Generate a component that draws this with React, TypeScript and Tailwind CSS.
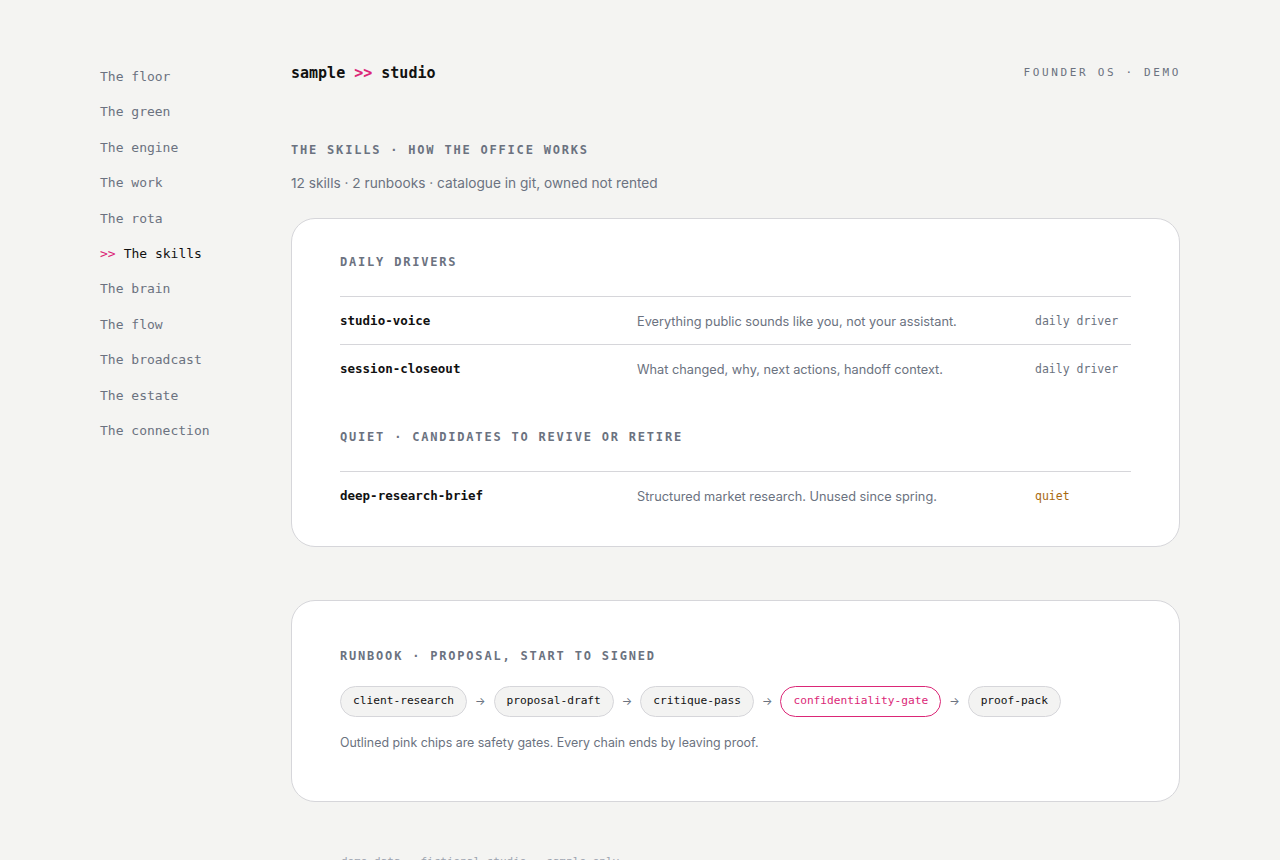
const mono = "font-['DejaVu_Sans_Mono',monospace]";
const sans = "font-['Inter',sans-serif]";

const navItems = [
  "The floor",
  "The green",
  "The engine",
  "The work",
  "The rota",
  "The skills",
  "The brain",
  "The flow",
  "The broadcast",
  "The estate",
  "The connection",
];

type Skill = { name: string; desc: string; tag: string; quiet?: boolean };

const dailyDrivers: Skill[] = [
  {
    name: "studio-voice",
    desc: "Everything public sounds like you, not your assistant.",
    tag: "daily driver",
  },
  {
    name: "session-closeout",
    desc: "What changed, why, next actions, handoff context.",
    tag: "daily driver",
  },
];

const quietOnes: Skill[] = [
  {
    name: "deep-research-brief",
    desc: "Structured market research. Unused since spring.",
    tag: "quiet",
    quiet: true,
  },
];

const chain = [
  { name: "client-research" },
  { name: "proposal-draft" },
  { name: "critique-pass" },
  { name: "confidentiality-gate", gate: true },
  { name: "proof-pack" },
];

const Label = ({ children }: { children: React.ReactNode }) => (
  <div
    className={`${mono} text-[12px] leading-4 font-bold tracking-[0.15em] text-[#6b7280] uppercase`}
  >
    {children}
  </div>
);

const SkillRow = ({ skill }: { skill: Skill }) => (
  <div className="grid h-12 grid-cols-[297px_398px_1fr] items-center border-t border-[#d6d6da] pt-[2px]">
    <div className={`${mono} text-[12.5px] font-bold text-[#111]`}>
      {skill.name}
    </div>
    <div className={`${sans} text-[12.75px] text-[#6b7280]`}>{skill.desc}</div>
    <div
      className={`${mono} text-[11.5px] ${
        skill.quiet ? "text-[#a8680f]" : "text-[#6b7280]"
      }`}
    >
      {skill.tag}
    </div>
  </div>
);

export default function App() {
  return (
    <div className="min-h-[860px] bg-[#f4f4f2] text-[#111]">
      <div className="flex pt-[58px] pl-[100px]">
        {/* Sidebar nav */}
        <nav className="mt-[1px] w-[191px] shrink-0">
          {navItems.map((item) => {
            const active = item === "The skills";
            return (
              <div
                key={item}
                className={`${mono} text-[13px] leading-[35.4px] ${
                  active ? "text-[#111]" : "text-[#6b7280]"
                }`}
              >
                {active && <span className="mr-[8px] text-[#db2777]">&gt;&gt;</span>}
                {item}
              </div>
            );
          })}
        </nav>

        {/* Main column */}
        <main className="w-[889px] pt-[3px]">
          <header className="flex h-6 items-center justify-between">
            <div className={`${mono} text-[15px] font-bold`}>
              sample <span className="text-[#db2777]">&gt;&gt;</span> studio
            </div>
            <div
              className={`${mono} mr-[-1px] text-[11px] tracking-[0.24em] text-[#6b7280]`}
            >
              FOUNDER OS · DEMO
            </div>
          </header>

          <div className="mt-[57px]">
            <Label>The skills · how the office works</Label>
          </div>
          <p className={`${sans} mt-[15px] text-[13.7px] leading-5 text-[#6b7280]`}>
            12 skills · 2 runbooks · catalogue in git, owned not rented
          </p>

          {/* Skills card */}
          <section className="mt-[25px] rounded-[24px] border border-[#d6d6da] bg-white px-12 pt-[35px] pb-[27px]">
            <Label>Daily drivers</Label>
            <div className="mt-[26px]">
              {dailyDrivers.map((s) => (
                <SkillRow key={s.name} skill={s} />
              ))}
            </div>

            <div className="mt-[37px]">
              <Label>Quiet · candidates to revive or retire</Label>
            </div>
            <div className="mt-[26px]">
              {quietOnes.map((s) => (
                <SkillRow key={s.name} skill={s} />
              ))}
            </div>
          </section>

          {/* Runbook card */}
          <section className="mt-[53px] rounded-[24px] border border-[#d6d6da] bg-white px-12 pt-[47px] pb-[48px]">
            <Label>Runbook · proposal, start to signed</Label>
            <div className="mt-[22px] flex items-center gap-[8px]">
              {chain.map((c, i) => (
                <div key={c.name} className="flex items-center gap-[8px]">
                  {i > 0 && (
                    <span className={`${sans} text-[11px] text-[#6b7280]`}>→</span>
                  )}
                  <span
                    className={`${mono} flex h-[31px] items-center rounded-full border px-[12px] text-[11.2px] ${
                      c.gate
                        ? "border-[#db2777] bg-white text-[#db2777]"
                        : "border-[#d6d6da] bg-[#f3f3f2] text-[#111]"
                    }`}
                  >
                    {c.name}
                  </span>
                </div>
              ))}
            </div>
            <p className={`${sans} mt-4 text-[12.4px] leading-5 text-[#6b7280]`}>
              Outlined pink chips are safety gates. Every chain ends by leaving proof.
            </p>
          </section>

          <footer
            className={`${mono} mt-[52px] pb-10 pl-[50px] text-[11px] text-[#9ca3af]`}
          >
            demo data · fictional studio · sample only
          </footer>
        </main>
      </div>
    </div>
  );
}
